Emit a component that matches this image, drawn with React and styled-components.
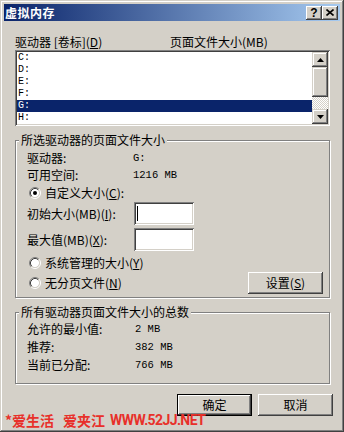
import styled, { createGlobalStyle } from "styled-components"

const GlobalStyle = createGlobalStyle`
  html, body {
    margin: 0;
    padding: 0;
    background: #d4d0c8;
  }
  body {
    font-family: "Noto Sans CJK SC", "DejaVu Sans", sans-serif;
    font-size: 12px;
    line-height: 16px;
    color: #000;
  }
  * {
    box-sizing: border-box;
  }
`

const drives = ["C:", "D:", "E:", "F:", "G:", "H:"]

function Radio({ checked }) {
    return (
        <RadioIcon width="12" height="12" viewBox="0 0 12 12">
            <circle cx="6" cy="6" r="4.2" fill="#fff" />
            <path d="M2.11 9.89A5.5 5.5 0 0 1 9.89 2.11" stroke="#808080" fill="none" />
            <path d="M9.89 2.11A5.5 5.5 0 0 1 2.11 9.89" stroke="#fff" fill="none" />
            <path d="M2.82 9.18A4.5 4.5 0 0 1 9.18 2.82" stroke="#404040" fill="none" />
            <path d="M9.18 2.82A4.5 4.5 0 0 1 2.82 9.18" stroke="#d4d0c8" fill="none" />
            {checked && <circle cx="6" cy="6" r="2" fill="#000" />}
        </RadioIcon>
    )
}

function Arrow({ down }) {
    return (
        <svg width="7" height="4" viewBox="0 0 7 4">
            <path d={down ? "M0 0H7L3.5 4Z" : "M0 4H7L3.5 0Z"} fill="#000" />
        </svg>
    )
}

function App() {
    return (
        <Window>
            <GlobalStyle />
            <TitleBar>
                <Title>虚拟内存</Title>
                <CaptionButtons>
                    <CaptionButton>?</CaptionButton>
                    <CaptionButton>
                        <svg width="8" height="7" viewBox="0 0 8 7">
                            <path d="M0.5 0.5L7.5 6.5M7.5 0.5L0.5 6.5" stroke="#000" strokeWidth="1.6" />
                        </svg>
                    </CaptionButton>
                </CaptionButtons>
            </TitleBar>

            <Body>
                <HeaderRow>
                    <HeaderLabel $w={155}>驱动器 [卷标](<u>D</u>)</HeaderLabel>
                    <HeaderLabel>页面文件大小(MB)</HeaderLabel>
                </HeaderRow>

                <ListBox>
                    <List>
                        {drives.map(d => (
                            <ListItem key={d} $selected={d === "G:"}>{d}</ListItem>
                        ))}
                    </List>
                    <ScrollBar>
                        <ScrollButton $h={15}><Arrow /></ScrollButton>
                        <ScrollButton $h={30} />
                        <ScrollTrack />
                        <ScrollButton $h={15}><Arrow down /></ScrollButton>
                    </ScrollBar>
                </ListBox>

                <Group $mt={6} $pb={3}>
                    <Legend>所选驱动器的页面文件大小</Legend>
                    <Row $mt={2}>
                        <Label $w={106}>驱动器:</Label>
                        <Value>G:</Value>
                    </Row>
                    <Row $mt={1}>
                        <Label $w={106}>可用空间:</Label>
                        <Value>1216 MB</Value>
                    </Row>
                    <RadioRow $mt={2}>
                        <Radio checked />
                        <span>自定义大小(<u>C</u>):</span>
                    </RadioRow>
                    <Row $mt={1} $h={23}>
                        <Label $w={107}>初始大小(MB)(<u>I</u>):</Label>
                        <TextBox><Caret /></TextBox>
                    </Row>
                    <Row $mt={3} $h={23}>
                        <Label $w={107}>最大值(MB)(<u>X</u>):</Label>
                        <TextBox />
                    </Row>
                    <RadioRow $mt={4}>
                        <Radio />
                        <span>系统管理的大小(<u>Y</u>)</span>
                    </RadioRow>
                    <Row $mt={1} $h={22}>
                        <RadioRow>
                            <Radio />
                            <span>无分页文件(<u>N</u>)</span>
                        </RadioRow>
                        <Spacer />
                        <Button $w={75} $h={22}>设置(<u>S</u>)</Button>
                    </Row>
                </Group>

                <Group $mt={6} $pb={10}>
                    <Legend>所有驱动器页面文件大小的总数</Legend>
                    <Row $mt={1}>
                        <Label $w={108}>允许的最小值:</Label>
                        <Value>2 MB</Value>
                    </Row>
                    <Row $mt={2}>
                        <Label $w={108}>推荐:</Label>
                        <Value>382 MB</Value>
                    </Row>
                    <Row $mt={2}>
                        <Label $w={108}>当前已分配:</Label>
                        <Value>766 MB</Value>
                    </Row>
                </Group>

                <ButtonRow>
                    <Button $w={75} $h={22} $default>确定</Button>
                    <Button $w={75} $h={22}>取消</Button>
                </ButtonRow>
            </Body>

            <Watermark>
                <span>*爱生活</span>
                <span>爱夹江</span>
                <WatermarkUrl>WWW.52JJ.NET</WatermarkUrl>
            </Watermark>
        </Window>
    )
}

export default App


const Window = styled.div`
    position: relative;
    width: 344px;
    height: 432px;
    padding: 4px;
    background: #d4d0c8;
    box-shadow: inset -1px -1px #404040, inset 1px 1px #d4d0c8,
        inset -2px -2px #808080, inset 2px 2px #fff;
`;

const TitleBar = styled.div`
    display: flex;
    align-items: center;
    justify-content: space-between;
    height: 17px;
    padding: 0 2px 0 1px;
    background: linear-gradient(to right, #0a246a, #a6caf0);
`;

const Title = styled.div`
    color: #fff;
    font-weight: bold;
    letter-spacing: 0.5px;
`;

const CaptionButtons = styled.div`
    display: flex;
`;

const CaptionButton = styled.div`
    display: flex;
    align-items: center;
    justify-content: center;
    width: 16px;
    height: 14px;
    background: #d4d0c8;
    font-family: "Liberation Sans", sans-serif;
    font-weight: bold;
    font-size: 12px;
    box-shadow: inset -1px -1px #404040, inset 1px 1px #fff, inset -2px -2px #808080;
`;

const Body = styled.div`
    display: flex;
    flex-direction: column;
    padding: 0 10px 0 11px;
`;

const HeaderRow = styled.div`
    display: flex;
    height: 16px;
    margin-top: 13px;
`;

const HeaderLabel = styled.span`
    width: ${p => (p.$w ? `${p.$w}px` : "auto")};
    flex-shrink: 0;
`;

const ListBox = styled.div`
    display: flex;
    height: 76px;
    padding: 2px;
    background: #fff;
    box-shadow: inset 1px 1px #808080, inset -1px -1px #fff,
        inset 2px 2px #404040, inset -2px -2px #d4d0c8;
`;

const List = styled.div`
    flex: 1;
    display: flex;
    flex-direction: column;
`;

const ListItem = styled.div`
    height: 12px;
    line-height: 12px;
    padding-left: 1px;
    font-family: "Liberation Mono", monospace;
    font-size: 10px;
    background: ${p => (p.$selected ? "#0a246a" : "transparent")};
    color: ${p => (p.$selected ? "#fff" : "#000")};
`;

const ScrollBar = styled.div`
    width: 16px;
    display: flex;
    flex-direction: column;
`;

const ScrollButton = styled.div`
    display: flex;
    align-items: center;
    justify-content: center;
    height: ${p => p.$h}px;
    flex-shrink: 0;
    background: #d4d0c8;
    box-shadow: inset -1px -1px #404040, inset 1px 1px #d4d0c8,
        inset -2px -2px #808080, inset 2px 2px #fff;
`;

const ScrollTrack = styled.div`
    flex: 1;
    background-color: #fff;
    background-image: repeating-conic-gradient(#d4d0c8 0 25%, #fff 0 50%);
    background-size: 2px 2px;
`;

const Group = styled.fieldset`
    margin: ${p => p.$mt}px 0 0;
    padding: 0 6px ${p => p.$pb}px 11px;
    min-width: 0;
    border: 1px solid #808080;
    box-shadow: inset 1px 1px #fff, 1px 1px #fff;
`;

const Legend = styled.legend`
    margin-left: -8px;
    padding: 0 2px;
    line-height: 16px;
    background: #d4d0c8;
`;

const Row = styled.div`
    display: flex;
    align-items: center;
    height: ${p => p.$h || 16}px;
    margin-top: ${p => p.$mt || 0}px;
`;

const RadioRow = styled.div`
    display: flex;
    align-items: center;
    gap: 4px;
    height: 16px;
    margin-top: ${p => p.$mt || 0}px;
    padding-left: 2px;
`;

const RadioIcon = styled.svg`
    flex-shrink: 0;
`;

const Label = styled.span`
    width: ${p => p.$w}px;
    flex-shrink: 0;
`;

const Value = styled.span`
    font-family: "Liberation Mono", monospace;
    font-size: 10.5px;
`;

const TextBox = styled.div`
    display: flex;
    align-items: center;
    width: 60px;
    height: 23px;
    padding-left: 3px;
    background: #fff;
    box-shadow: inset 1px 1px #808080, inset -1px -1px #fff,
        inset 2px 2px #404040, inset -2px -2px #d4d0c8;
`;

const Caret = styled.div`
    width: 1px;
    height: 15px;
    background: #000;
`;

const Spacer = styled.div`
    flex: 1;
`;

const Button = styled.div`
    display: flex;
    align-items: center;
    justify-content: center;
    width: ${p => p.$w}px;
    height: ${p => p.$h}px;
    background: #d4d0c8;
    border: ${p => (p.$default ? "1px solid #000" : "none")};
    box-shadow: inset -1px -1px #404040, inset 1px 1px #fff, inset -2px -2px #808080;
`;

const ButtonRow = styled.div`
    display: flex;
    justify-content: flex-end;
    gap: 6px;
    margin: 10px -3px 0 0;
`;

const Watermark = styled.div`
    position: absolute;
    left: 5px;
    top: 411px;
    display: flex;
    gap: 9px;
    color: #e8302a;
    font-weight: bold;
    font-size: 14px;
    line-height: 18px;
    white-space: nowrap;
`;

const WatermarkUrl = styled.span`
    margin-left: -4px;
    font-family: Roboto, "Liberation Sans", sans-serif;
    font-size: 14px;
    letter-spacing: -0.6px;
`;
